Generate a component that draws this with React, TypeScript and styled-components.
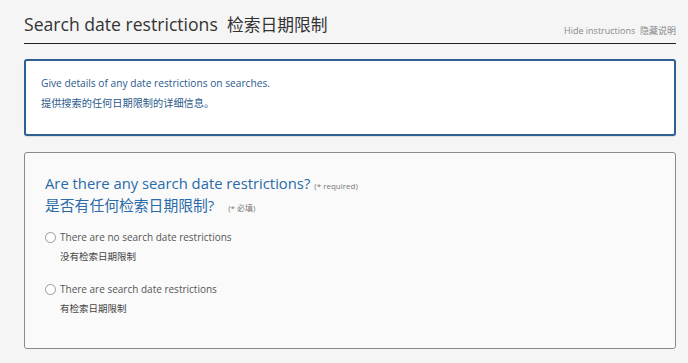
import React from "react";
import styled, { createGlobalStyle } from "styled-components";

const Global = createGlobalStyle`
  html, body { margin: 0; padding: 0; background: #f5f5f5; }
  body { font-family: "Open Sans", "Noto Sans CJK SC", sans-serif; }
`;

const Page = styled.div`
  padding: 0 12px 0 24px;
  width: 652px;
`;

const Header = styled.div`
  display: flex;
  align-items: flex-end;
  justify-content: space-between;
  padding-top: 11px;
  padding-bottom: 5px;
  border-bottom: 1px solid #222;
`;

const Title = styled.h1`
  margin: 0;
  font-size: 17.6px;
  font-weight: 400;
  color: #333;
  line-height: 26px;
`;

const Cjk = styled.span<{ size: number }>`
  font-size: ${(p) => p.size}px;
`;

const HideLink = styled.span`
  font-size: 9px;
  color: #888;
  line-height: 12px;
  margin-bottom: 1px;
`;

const InstructionBox = styled.div`
  margin-top: 15px;
  background: #fff;
  border: 2px solid #2f6094;
  border-radius: 3px;
  padding: 12px 15px 21px;
  box-shadow: 0 1px 1px rgba(0,0,0,0.1);
`;

const InstrText = styled.p`
  margin: 0;
  font-size: 10.2px;
  line-height: 20px;
  color: #2a5a8c;
`;

const QuestionBox = styled.div`
  margin-top: 16px;
  background: #fafafa;
  border: 1px solid #8a8a8a;
  border-radius: 3px;
  padding: 19px 20px 29px;
`;

const QTitle = styled.div`
  font-size: 14.8px;
  line-height: 22px;
  height: 22px;
  color: #2a6aa8;
  white-space: nowrap;
`;

const Req = styled.span<{ gap?: number }>`
  font-size: 8px;
  line-height: 1;
  color: #777;
  margin-left: ${(p) => p.gap ?? 4}px;
`;

const Options = styled.div`
  margin-top: 11px;
  display: flex;
  flex-direction: column;
  gap: 12px;
`;

const Option = styled.label`
  display: grid;
  grid-template-columns: 15px auto;
  grid-auto-rows: 20px;
`;

const Radio = styled.span`
  width: 9px;
  height: 9px;
  border: 1px solid #999;
  border-radius: 50%;
  background: #fff;
  margin-top: 5px;
`;

const OptLabel = styled.span`
  font-size: 10px;
  line-height: 20px;
  color: #555;
`;

const OptSub = styled.span`
  grid-column: 2;
  font-size: 9.5px;
  line-height: 20px;
  color: #444;
`;

export default function App() {
  return (
    <>
      <Global />
      <Page>
        <Header>
          <Title>
            Search date restrictions&nbsp; <Cjk size={16.8}>检索日期限制</Cjk>
          </Title>
          <HideLink>Hide instructions&nbsp; 隐藏说明</HideLink>
        </Header>
        <InstructionBox>
          <InstrText>Give details of any date restrictions on searches.</InstrText>
          <InstrText>提供搜索的任何日期限制的详细信息。</InstrText>
        </InstructionBox>
        <QuestionBox>
          <QTitle>
            Are there any search date restrictions?<Req>(* required)</Req>
          </QTitle>
          <QTitle>
            是否有任何检索日期限制?<Req gap={14}>(* 必填)</Req>
          </QTitle>
          <Options>
            <Option>
              <Radio />
              <OptLabel>There are no search date restrictions</OptLabel>
              <OptSub>没有检索日期限制</OptSub>
            </Option>
            <Option>
              <Radio />
              <OptLabel>There are search date restrictions</OptLabel>
              <OptSub>有检索日期限制</OptSub>
            </Option>
          </Options>
        </QuestionBox>
      </Page>
    </>
  );
}
